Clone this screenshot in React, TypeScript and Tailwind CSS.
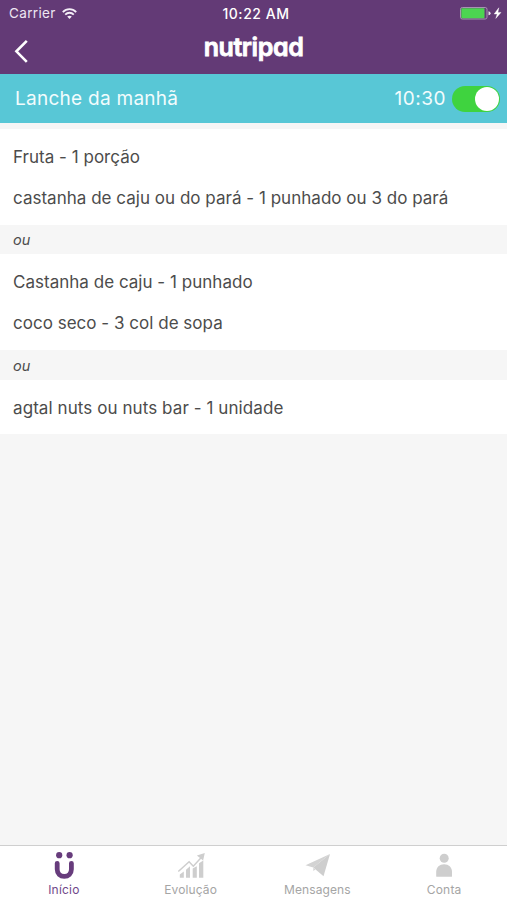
import React from "react";

const groups: string[][] = [
  ["Fruta - 1 porção", "castanha de caju ou do pará - 1 punhado ou 3 do pará"],
  ["Castanha de caju - 1 punhado", "coco seco - 3 col de sopa"],
  ["agtal nuts ou nuts bar - 1 unidade"],
];

function WifiIcon() {
  return (
    <svg className="ml-[6px] h-[11px] w-[15px]" viewBox="0 0 15 11" fill="none" stroke="#f4eef7" strokeWidth="1.8">
      <path d="M0.8 4.1C4.6 .2 10.4 .2 14.2 4.1" />
      <path d="M3.2 6.6C5.7 4.1 9.3 4.1 11.8 6.6" />
      <path d="M5.2 8.6C6.5 7.4 8.5 7.4 9.8 8.6L7.5 11Z" fill="#f4eef7" stroke="none" />
    </svg>
  );
}

function BatteryIcon() {
  return (
    <svg className="-mt-px h-[14px] w-[42px]" viewBox="0 0 42 14">
      <rect x="0.5" y="1.5" width="26.5" height="11.5" rx="1.8" fill="none" stroke="#a894b2" />
      <rect x="1.3" y="2.2" width="23.2" height="10" rx="0.8" fill="#4cd551" />
      <path d="M28.5 5.2Q30.6 5.5 30.6 7.2Q30.6 9 28.5 9.3Z" fill="#e6dfea" />
      <path d="M38.8 1.8L34.2 8H37.2L35.8 12.4L41 6.4H37.9Z" fill="#fff" stroke="#fff" strokeWidth="0.4" />
    </svg>
  );
}

function HomeIcon() {
  return (
    <svg className="h-[30px] w-[30px]" viewBox="0 0 30 30">
      <circle cx="10.2" cy="5.2" r="3.1" fill="#673c7c" />
      <circle cx="20.6" cy="5.2" r="3.1" fill="#673c7c" />
      <path d="M8.2 13.3V19.3C8.2 23.7 11.2 26.4 15.3 26.4S22.4 23.7 22.4 19.3V13.3" fill="none" stroke="#673c7c" strokeWidth="4.8" strokeLinecap="round" />
    </svg>
  );
}

function ChartIcon() {
  return (
    <svg className="h-[30px] w-[30px]" viewBox="0 0 30 30" fill="#cecece">
      <path d="M3.8 24.5L7.8 21.6V27.8H3.8ZM10 19.7L14 16.3V27.8H10ZM16.7 18.5L20.8 16.3V27.8H16.7ZM23 13.2L27.3 10.6V27.8H23Z" />
      <path d="M2.3 21.5L13.1 11.7L17.3 16.2L25.5 7.2" fill="none" stroke="#cecece" strokeWidth="1.5" />
      <path d="M28.8 3L20.9 5.6L27.1 10.6Z" />
    </svg>
  );
}

function SendIcon() {
  return (
    <svg className="h-[30px] w-[30px]" viewBox="0 0 30 30">
      <path d="M28 4L3.5 15.2L11.3 17.5Z" fill="#d3d3d3" />
      <path d="M28 4L11.3 17.5L21.5 26.3Z" fill="#cecece" />
      <path d="M11.3 17.5V21L13.5 19.4Z" fill="#d6d6d6" />
    </svg>
  );
}

function PersonIcon() {
  return (
    <svg className="h-[30px] w-[30px]" viewBox="0 0 30 30" fill="#cecece">
      <circle cx="15.2" cy="8.3" r="4.5" />
      <path d="M7.2 26.4V21.8C7.2 17.2 10.6 14.2 15.1 14.2S23 17.2 23 21.8V26.4Q22.8 26.8 22 26.8H8.2Q7.4 26.8 7.2 26.4Z" />
    </svg>
  );
}

const tabs = [
  { label: "Início", icon: <HomeIcon />, style: "text-[#70488a] tracking-[0.2px]" },
  { label: "Evolução", icon: <ChartIcon />, style: "text-[#a5a5a5] tracking-[0.1px]" },
  { label: "Mensagens", icon: <SendIcon />, style: "text-[#a5a5a5] tracking-[0.1px]" },
  { label: "Conta", icon: <PersonIcon />, style: "text-[#a5a5a5] tracking-[0.2px]" },
];

export default function App() {
  return (
    <div className="flex h-[900px] w-[507px] flex-col overflow-hidden bg-[#f6f6f6] font-['Inter','Liberation_Sans',sans-serif]">
      <header className="h-[74px] shrink-0 bg-[#633a76] text-white">
        <div className="grid h-[27px] grid-cols-[166px_1fr_166px] items-center">
          <div className="flex items-center pl-[9px] text-[13.5px] tracking-[0.35px] text-[#eee6f2]">
            <span>Carrier</span>
            <WifiIcon />
          </div>
          <div className="pb-px pl-[5px] text-center text-[14px] font-medium tracking-[0.55px]">10:22 AM</div>
          <div className="flex justify-end pr-[5px]"><BatteryIcon /></div>
        </div>
        <div className="grid h-[42px] grid-cols-3 items-center">
          <svg className="ml-[14px] mt-[5px] h-[24px] w-[16px]" viewBox="0 0 16 24" fill="none" stroke="#fff" strokeWidth="2.6">
            <path d="M12.8 1.8L2.4 12.3L12.8 22.8" />
          </svg>
          <div className="pb-[2px] text-center text-[25px] font-semibold leading-[40px] tracking-[-0.4px] [font-feature-settings:'cv11'] [stroke-linejoin:round] [-webkit-text-stroke:0.8px_white]">nutripad</div>
        </div>
      </header>
      <section className="flex h-[49px] shrink-0 items-center bg-[#58c7d6] pl-[15px] pr-[7px] text-[19px] text-[#f2fcfd]">
        <h1 className="pt-[2px] tracking-[0.27px]">Lanche da manhã</h1>
        <span className="ml-auto pt-[2px] tracking-[0.5px]">10:30</span>
        <div className="ml-[6px] flex h-[26px] w-[48px] items-center justify-end rounded-full bg-[#3fd33f] pr-px">
          <div className="h-[24px] w-[24px] rounded-full bg-white" />
        </div>
      </section>
      <main className="flex-1 pt-[6px] text-[#4c4c4c]">
        {groups.map((items, i) => (
          <React.Fragment key={i}>
            {i > 0 && (
              <div className={`flex items-center pl-[13px] pt-px text-[14.5px] italic ${i === 1 ? "h-[29px]" : "h-[30px]"}`}>ou</div>
            )}
            <div className={`bg-white pl-[13px] pt-[8px] text-[17px] ${i === 2 ? "pb-[5px] tracking-[0.08px]" : "pb-[6px] tracking-[0.02px]"}`}>
              {items.map((item) => (
                <p key={item} className="h-[41px] whitespace-nowrap leading-[41px]">{item}</p>
              ))}
            </div>
          </React.Fragment>
        ))}
      </main>
      <nav className="grid h-[55px] shrink-0 grid-cols-4 border-t border-[#cfcfcf] bg-white">
        {tabs.map((tab) => (
          <div key={tab.label} className="flex flex-col items-center pl-px pt-[4px]">
            {tab.icon}
            <span className={`mt-px text-[12px] leading-[18px] ${tab.style}`}>{tab.label}</span>
          </div>
        ))}
      </nav>
    </div>
  );
}
